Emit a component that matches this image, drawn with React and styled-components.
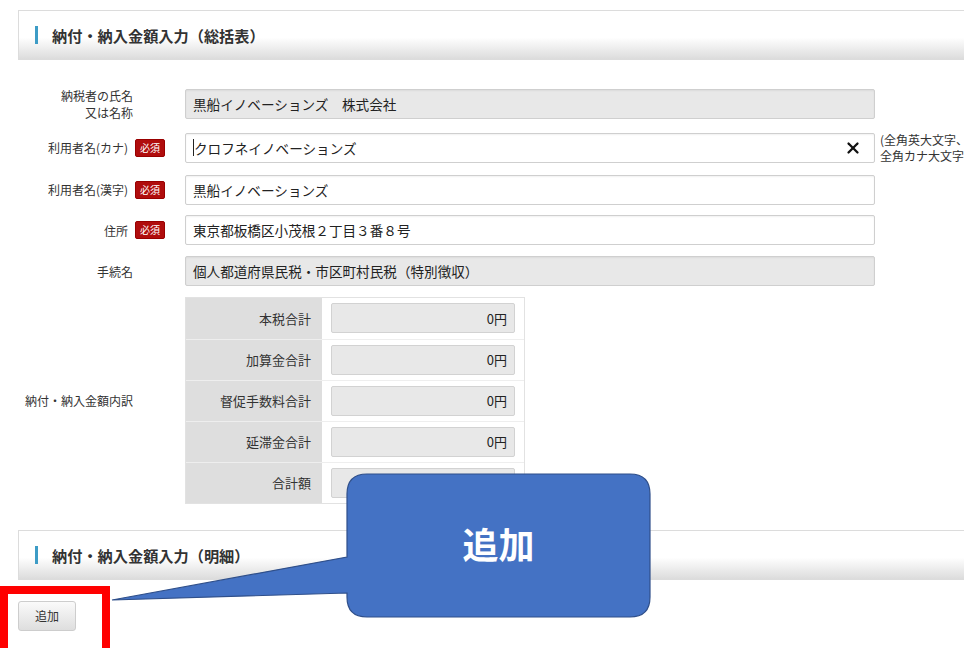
import React from 'react';
import styled, { createGlobalStyle } from 'styled-components';
import { X } from 'lucide-react';

const GlobalStyle = createGlobalStyle`
	html, body {
		margin: 0;
		padding: 0;
		background: #fff;
		overflow: hidden;
	}
	body {
		font-family: "Noto Sans CJK JP", "Noto Sans", sans-serif;
		color: #333;
	}
`;

const Page = styled.div`
	position: relative;
	width: 964px;
	height: 648px;
	overflow: hidden;
	padding-top: 10px;
	box-sizing: border-box;
`;

const Panel = styled.div`
	margin-left: 18px;
	width: 1000px;
	height: 50px;
	box-sizing: border-box;
	border: 1px solid #dcdcdc;
	background: linear-gradient(to bottom, #fff 55%, #dcdcdc 100%);
	display: flex;
	align-items: center;
	padding-left: 16px;
	margin-top: ${(p) => p.$top || 0}px;
`;

const Bar = styled.span`
	width: 3px;
	height: 18px;
	background: #3d9cc6;
	margin-right: 14px;
`;

const Title = styled.h2`
	margin: 0;
	font-size: 15.2px;
	font-weight: 700;
	color: #333;
`;

const Form = styled.div`
	margin-top: 27px;
	display: flex;
	flex-direction: column;
	gap: 10.8px;
`;

const Row = styled.div`
	display: grid;
	grid-template-columns: 185px 690px auto;
	align-items: center;
	min-height: 30px;
`;

const LabelCell = styled.div`
	display: flex;
	justify-content: flex-end;
	align-items: center;
	gap: 7px;
	padding-right: ${(p) => (p.$plain ? 52 : 20)}px;
	font-size: 12px;
	line-height: 17px;
	color: #333;
	text-align: right;
	white-space: nowrap;
`;

const Badge = styled.span`
	display: inline-block;
	background: #b00d0d;
	color: #fff;
	font-size: 10px;
	line-height: 16px;
	padding: 0 4px;
	border-radius: 2px;
	border: 1px solid #900;
`;

const Field = styled.div`
	height: 30px;
	box-sizing: border-box;
	border: 1px solid #cfcfcf;
	border-radius: 2px;
	background: ${(p) => (p.$readonly ? '#e8e8e8' : '#fff')};
	box-shadow: inset 0 1px 2px rgba(0, 0, 0, 0.06);
	display: flex;
	align-items: center;
	padding: 0 12px 0 7px;
	font-size: 13.6px;
	color: #222;
	white-space: nowrap;
`;

const Caret = styled.span`
	display: inline-block;
	width: 1px;
	height: 17px;
	background: #222;
`;

const Clear = styled.span`
	margin-left: auto;
	display: flex;
	align-items: center;
	color: #111;
`;

const Note = styled.div`
	padding-left: 5px;
	font-size: 12px;
	line-height: 16px;
	color: #333;
	white-space: nowrap;
`;

const Breakdown = styled.div`
	width: 338px;
	border: 1px solid #e2e2e2;
	display: flex;
	flex-direction: column;
`;

const BRow = styled.div`
	display: grid;
	grid-template-columns: 136px 1fr;
	height: 41px;
	border-top: ${(p) => (p.$first ? 'none' : '1px solid #eee')};
	box-sizing: border-box;
`;

const BLabel = styled.div`
	background: #dedede;
	display: flex;
	align-items: center;
	justify-content: flex-end;
	padding-right: 11px;
	font-size: 13px;
	color: #333;
`;

const BValueCell = styled.div`
	display: flex;
	align-items: center;
	padding: 0 9px;
`;

const Amount = styled.div`
	flex: 1;
	height: 30px;
	box-sizing: border-box;
	border: 1px solid #d2d2d2;
	border-radius: 2px;
	background: #e8e8e8;
	display: flex;
	align-items: center;
	justify-content: flex-end;
	padding-right: 7px;
	font-size: 13px;
	color: #222;
`;

const Button = styled.button`
	margin: 21px 0 0 18px;
	width: 58px;
	height: 30px;
	border: 1px solid #cdcdcd;
	border-radius: 3px;
	background: linear-gradient(to bottom, #fafafa, #dedede);
	font-family: inherit;
	font-size: 12px;
	color: #333;
	padding: 0;
`;

const Highlight = styled.div`
	position: absolute;
	left: 0;
	top: 586px;
	width: 110px;
	height: 80px;
	box-sizing: border-box;
	border: 8px solid #ff0000;
	pointer-events: none;
`;

const Callout = styled.div`
	position: absolute;
	left: 0;
	top: 0;
	width: 964px;
	height: 648px;
	pointer-events: none;
	svg {
		position: absolute;
		left: 0;
		top: 0;
	}
`;

const CalloutText = styled.div`
	position: absolute;
	left: 347px;
	top: 474px;
	width: 303px;
	height: 140px;
	display: flex;
	align-items: center;
	justify-content: center;
	color: #fff;
	font-size: 36px;
	font-weight: 700;
	padding-bottom: 3px;
	box-sizing: border-box;
`;

const amounts = [
	['本税合計', '0円'],
	['加算金合計', '0円'],
	['督促手数料合計', '0円'],
	['延滞金合計', '0円'],
	['合計額', ''],
];

const App = () => {
	return (
		<>
			<GlobalStyle />
			<Page>
				<Panel>
					<Bar />
					<Title>納付・納入金額入力（総括表）</Title>
				</Panel>
				<Form>
					<Row>
						<LabelCell $plain>
							納税者の氏名
							<br />
							又は名称
						</LabelCell>
						<Field $readonly>黒船イノベーションズ　株式会社</Field>
					</Row>
					<Row>
						<LabelCell>
							利用者名(カナ)<Badge>必須</Badge>
						</LabelCell>
						<Field>
							<Caret />
							クロフネイノベーションズ
							<Clear>
								<X size={18} strokeWidth={3} />
							</Clear>
						</Field>
						<Note>
							(全角英大文字、
							<br />
							全角カナ大文字、
						</Note>
					</Row>
					<Row>
						<LabelCell>
							利用者名(漢字)<Badge>必須</Badge>
						</LabelCell>
						<Field>黒船イノベーションズ</Field>
					</Row>
					<Row>
						<LabelCell>
							住所<Badge>必須</Badge>
						</LabelCell>
						<Field>東京都板橋区小茂根２丁目３番８号</Field>
					</Row>
					<Row>
						<LabelCell $plain>手続名</LabelCell>
						<Field $readonly>個人都道府県民税・市区町村民税（特別徴収）</Field>
					</Row>
					<Row>
						<LabelCell $plain>納付・納入金額内訳</LabelCell>
						<Breakdown>
							{amounts.map(([label, value], i) => (
								<BRow key={label} $first={i === 0}>
									<BLabel>{label}</BLabel>
									<BValueCell>
										<Amount>{value}</Amount>
									</BValueCell>
								</BRow>
							))}
						</Breakdown>
					</Row>
				</Form>
				<Panel $top={26}>
					<Bar />
					<Title>納付・納入金額入力（明細）</Title>
				</Panel>
				<Button>追加</Button>
				<Highlight />
				<Callout>
					<svg width='964' height='648' viewBox='0 0 964 648'>
						<path
							d='M367 474H630Q650 474 650 494V597Q650 617 630 617H367Q347 617 347 597V593L112 600L347 557V494Q347 474 367 474Z'
							fill='#4472c4'
							stroke='#2f4f8a'
							strokeWidth='1.2'
						/>
					</svg>
					<CalloutText>追加</CalloutText>
				</Callout>
			</Page>
		</>
	);
};

export default App;
